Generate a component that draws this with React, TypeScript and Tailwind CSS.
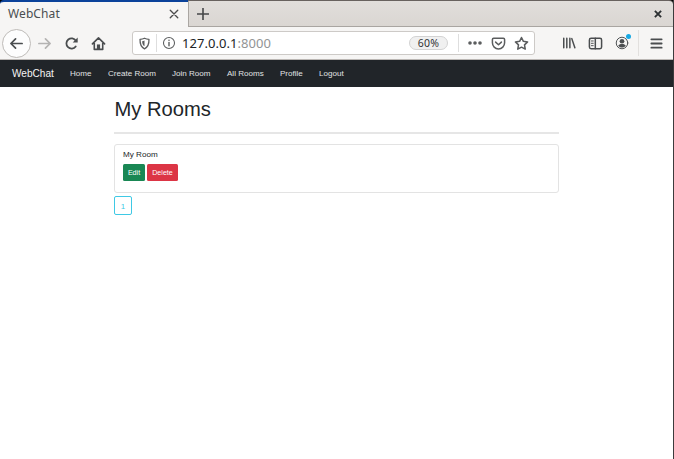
import React from 'react';

const navLinks = [
  { label: 'Home', width: 'w-[38px]' },
  { label: 'Create Room', width: 'w-[64px]' },
  { label: 'Join Room', width: 'w-[55px]' },
  { label: 'All Rooms', width: 'w-[53px]' },
  { label: 'Profile', width: 'w-[39px]' },
  { label: 'Logout', width: 'w-[40px]' },
];

function Icon({ size = 16, className = '', children }: { size?: number; className?: string; children: React.ReactNode }) {
  return (
    <svg
      width={size}
      height={size}
      viewBox="0 0 16 16"
      fill="none"
      stroke="currentColor"
      strokeWidth="1.6"
      strokeLinecap="round"
      strokeLinejoin="round"
      className={`shrink-0 ${className}`}
    >
      {children}
    </svg>
  );
}

function TabStrip() {
  return (
    <div className="flex h-[27px] shrink-0 bg-black">
      <div className="flex w-[188px] items-center rounded-tl-[4px] border-t-2 border-[#0b429a] bg-[#f6f5f4] pr-2 pl-2">
        <span className="-mt-px text-[12px] leading-none tracking-[0.100px] text-[#4a4e50]">WebChat</span>
        <Icon size={12} className="-mt-px ml-auto text-[#4b4b4b]">
          <path d="M3 3l10 10M13 3L3 13" strokeWidth="1.8" />
        </Icon>
      </div>
      <div className="flex flex-1 items-center rounded-tr-[4px] border-t border-b border-l border-t-[#68625f] border-b-[#a9a5a1] border-l-[#aaa6a2] bg-linear-to-b from-[#e1dedb] to-[#dad6d2] pl-[6px]">
        <Icon className="text-[#454748]">
          <path d="M8 2v12M2 8h12" strokeLinecap="butt" />
        </Icon>
        <Icon size={10} className="mt-[1px] mr-[10px] ml-auto text-[#2c3032]">
          <path d="M3 3l10 10M13 3L3 13" strokeWidth="3" strokeLinecap="butt" />
        </Icon>
      </div>
    </div>
  );
}

function AddressBar() {
  return (
    <div className="ml-[26px] flex h-6 w-[403px] items-center rounded-[3px] border border-[#cdcac7] bg-white text-[#5b5d5e]">
      <Icon size={13} className="ml-[5px]">
        <path d="M8 1.500c2 .9 3.700 1.200 5.500 1.300C13.700 8 12.500 12.400 8 14.600 3.500 12.400 2.300 8 2.500 2.800 4.300 2.700 6 2.400 8 1.500z" />
        <path d="M8 4.300c-1 .5-1.800.7-2.900.8.1 3 .8 5.100 2.900 6.400z" fill="currentColor" stroke="none" />
      </Icon>
      <div className="ml-[5px] h-[18px] w-px bg-[#dedede]" />
      <Icon size={14} className="ml-[5px]">
        <circle cx="8" cy="8" r="6.300" strokeWidth="1.200" />
        <path d="M8 7.400v3.800" />
        <path d="M8 4.800v.1" strokeWidth="1.800" />
      </Icon>
      <span className="ml-[6px] text-[13px] leading-none tracking-[0.050px] text-[#202325]">
        127.0.0.1<span className="text-[#929495]">:8000</span>
      </span>
      <div className="ml-auto flex h-[14px] w-[39px] items-center justify-center rounded-full border border-[#d3d3d3] bg-[#f0f0f0] text-[10.500px] leading-none tracking-[0.300px] text-[#303335]">
        60%
      </div>
      <div className="ml-[10px] h-[18px] w-px bg-[#dedede]" />
      <Icon className="ml-[8px]">
        <g fill="currentColor" stroke="none">
          <circle cx="3" cy="8" r="1.800" />
          <circle cx="8" cy="8" r="1.800" />
          <circle cx="13" cy="8" r="1.800" />
        </g>
      </Icon>
      <Icon size={15} className="ml-[8px]">
        <path d="M2.800 2.500h10.400c.8 0 1.300.5 1.300 1.300v3.500a6.500 6.500 0 0 1-13 0V3.800c0-.8.500-1.300 1.300-1.300z" />
        <path d="M4.900 6.500L8 9.400l3.100-2.900" />
      </Icon>
      <Icon size={15} className="mr-[5px] ml-[8px]">
        <path d="M8 1.600l2 4.100 4.500.6-3.300 3.200.8 4.500L8 11.900 4 14l.8-4.500L1.500 6.300 6 5.700z" />
      </Icon>
    </div>
  );
}

function Toolbar() {
  return (
    <div className="flex h-[33px] shrink-0 items-center border-b border-[#bbb7b4] bg-[#f6f5f4] text-[#4a4d4f]">
      <div className="ml-[2px] flex size-[29px] shrink-0 items-center justify-center rounded-full border border-[#bebbb8] bg-[#fdfdfd]">
        <Icon size={15}>
          <path d="M14 8H2.500M7 3L2 8l5 5" strokeWidth="1.800" />
        </Icon>
      </div>
      <Icon size={15} className="ml-[6px] text-[#b4b3b2]">
        <path d="M2 8h11.500M9 3l5 5-5 5" strokeWidth="1.800" />
      </Icon>
      <Icon size={15} className="ml-[12px]">
        <path d="M12.500 11.200A5.500 5.500 0 1 1 12.700 5" strokeWidth="1.900" />
        <path d="M14.600 1.500v5.300H9.300z" fill="currentColor" stroke="none" />
      </Icon>
      <Icon size={15} className="ml-[12px]">
        <path d="M1.500 8.400L8 2l6.500 6.400M3.500 7.500v6.800h9V7.500" strokeWidth="1.700" />
        <path d="M6.300 14V9h3.400v5z" fill="currentColor" stroke="none" />
      </Icon>
      <AddressBar />
      <Icon size={14} className="ml-[27px]">
        <path d="M2 2.500v11M5.500 2.500v11M9 2.500v11M11.200 3l3.500 10.500" strokeWidth="1.700" />
      </Icon>
      <Icon size={15} className="ml-[12px]">
        <rect x="1.500" y="2.500" width="13" height="11" rx="1.800" />
        <path d="M7.800 2.500v11" />
        <path d="M3.600 5.300h2M3.600 7.800h2M3.600 10.300h2" strokeWidth="1" />
      </Icon>
      <div className="relative ml-[12px]">
        <Icon size={14}>
          <circle cx="8" cy="8" r="6.600" strokeWidth="1.100" />
          <circle cx="8" cy="6" r="2.700" fill="currentColor" stroke="none" />
          <path d="M3.700 11.200c.8-1.500 2-2.200 4.300-2.200s3.500.7 4.300 2.200c-1.100 1.300-2.500 2-4.300 2s-3.200-.7-4.300-2z" fill="currentColor" stroke="none" />
        </Icon>
        <div className="absolute -top-[2px] -right-[2px] size-[5px] rounded-full bg-[#17a8e3]" />
      </div>
      <div className="ml-[9px] h-[26px] w-px bg-[#e2e0de]" />
      <Icon size={15} className="ml-[10px]">
        <path d="M2.500 3.500h11M2.500 8h11M2.500 12.500h11" strokeWidth="1.900" />
      </Icon>
    </div>
  );
}

export default function App() {
  return (
    <div className="flex h-[459px] w-[674px] flex-col overflow-hidden bg-white font-['Noto_Sans',sans-serif]">
      <div className="flex min-h-0 flex-1 flex-col border-r border-[#3c3b3c]">
        <TabStrip />
        <Toolbar />
        <div className="flex min-h-0 flex-1 flex-col font-['Liberation_Sans',Arial,sans-serif] text-[#212529]">
          <nav className="flex h-[27px] shrink-0 items-center bg-[#212529] pt-[2px] pl-3 whitespace-nowrap text-[#e0e2e3]">
            <a className="w-[58px] text-[10.100px] leading-none text-[#f4f4f4]">WebChat</a>
            {navLinks.map((link) => (
              <a key={link.label} className={`shrink-0 text-[8.050px] leading-none ${link.width}`}>
                {link.label}
              </a>
            ))}
          </nav>
          <main className="ml-[114px] w-[445px] pt-[10px]">
            <h1 className="pl-[0.500px] text-[20.200px] leading-6">My Rooms</h1>
            <hr className="mt-[11px] border-t-2 border-[#e6e6e6]" />
            <section className="mt-[10px] h-[49px] rounded-[3px] border border-[#e3e3e3] pt-[5px] pl-2">
              <h2 className="text-[8.100px] leading-[10px]">My Room</h2>
              <div className="mt-[4px] flex gap-[2px] text-[7.100px] leading-none text-white">
                <button className="h-[17px] w-[22px] rounded-[1.500px] bg-[#198754] pt-[2px]">Edit</button>
                <button className="h-[17px] w-[31px] rounded-[1.500px] bg-[#dc3545] pt-[2px]">Delete</button>
              </div>
            </section>
            <button className="mt-[3px] flex h-[19px] w-[18px] items-center justify-center rounded-[2px] border border-[#3fc9e5] pt-[2px] text-[8px] leading-none text-[#3fc9e5]">
              1
            </button>
          </main>
        </div>
      </div>
    </div>
  );
}
